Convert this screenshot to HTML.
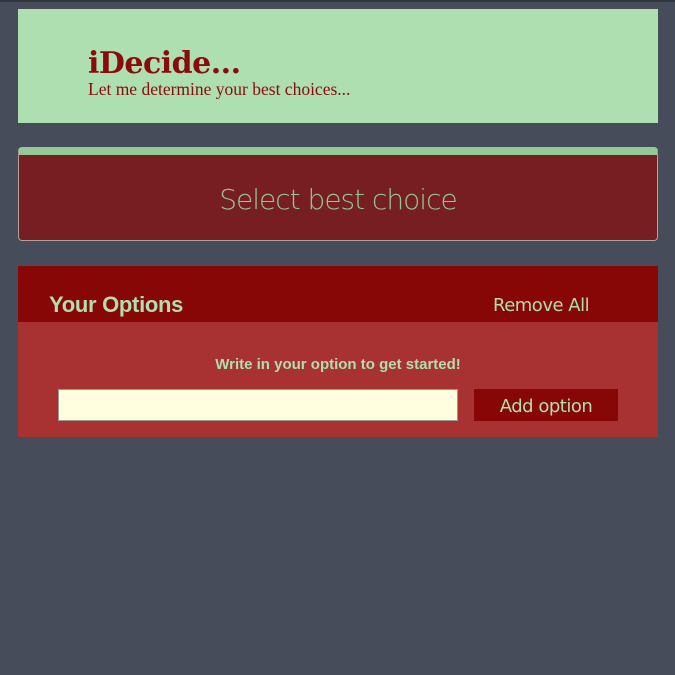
<!DOCTYPE html>
<html><head><meta charset="utf-8"><style>
html,body{margin:0;padding:0}
body{width:675px;height:675px;background:#464c5a;position:relative;overflow:hidden}
.top{position:absolute;left:0;top:0;width:675px;height:2px;background:#30343e}
.hdr{position:absolute;left:18px;top:9px;width:640px;height:114px;background:#addfb0}
.hdr h1{position:absolute;left:70px;top:40px;margin:0;font:bold 30px/1 "DejaVu Serif","Liberation Serif",serif;color:#8a0b0b;letter-spacing:-0.5px}
.hdr p{position:absolute;left:70px;top:72px;margin:0;font:17.5px/1 "Liberation Serif",serif;color:#8a0b0b}
.sel{position:absolute;left:18px;top:147px;width:638px;height:85px;background:#761e21;border:1px solid #b0a0a0;border-top:8px solid #95c797;border-radius:4px;text-align:center;font:300 28px/90px "DejaVu Sans","Liberation Sans",sans-serif;color:#95c797;letter-spacing:-1px}
.opt{position:absolute;left:18px;top:266px;width:640px;height:171px;background:#a83232}
.oh{height:56px;background:#870707;position:relative}
.oh .t{position:absolute;left:31px;top:28px;font:bold 22px/1 "Liberation Sans",sans-serif;color:#addfb0;letter-spacing:-0.3px}
.oh .r{position:absolute;left:475px;top:31px;font:18px/1 "DejaVu Sans","Liberation Sans",sans-serif;color:#addfb0;letter-spacing:-0.5px}
.msg{position:absolute;top:91px;width:640px;text-align:center;font:bold 15px/1 "Liberation Sans",sans-serif;color:#addfb0}
.in{position:absolute;left:40px;top:123px;width:398px;height:30px;background:#ffffe0;border:1px solid #999}
.btn{position:absolute;left:456px;top:123px;width:144px;height:32px;background:#870707;color:#addfb0;text-align:center;font:18px/36px "DejaVu Sans","Liberation Sans",sans-serif;letter-spacing:-0.5px}
</style></head><body>
<div class="top"></div>
<div class="hdr"><h1>iDecide...</h1><p>Let me determine your best choices...</p></div>
<div class="sel">Select best choice</div>
<div class="opt">
<div class="oh"><span class="t">Your Options</span><span class="r">Remove All</span></div>
<div class="msg">Write in your option to get started!</div>
<div class="in"></div>
<div class="btn">Add option</div>
</div>
</body></html>
